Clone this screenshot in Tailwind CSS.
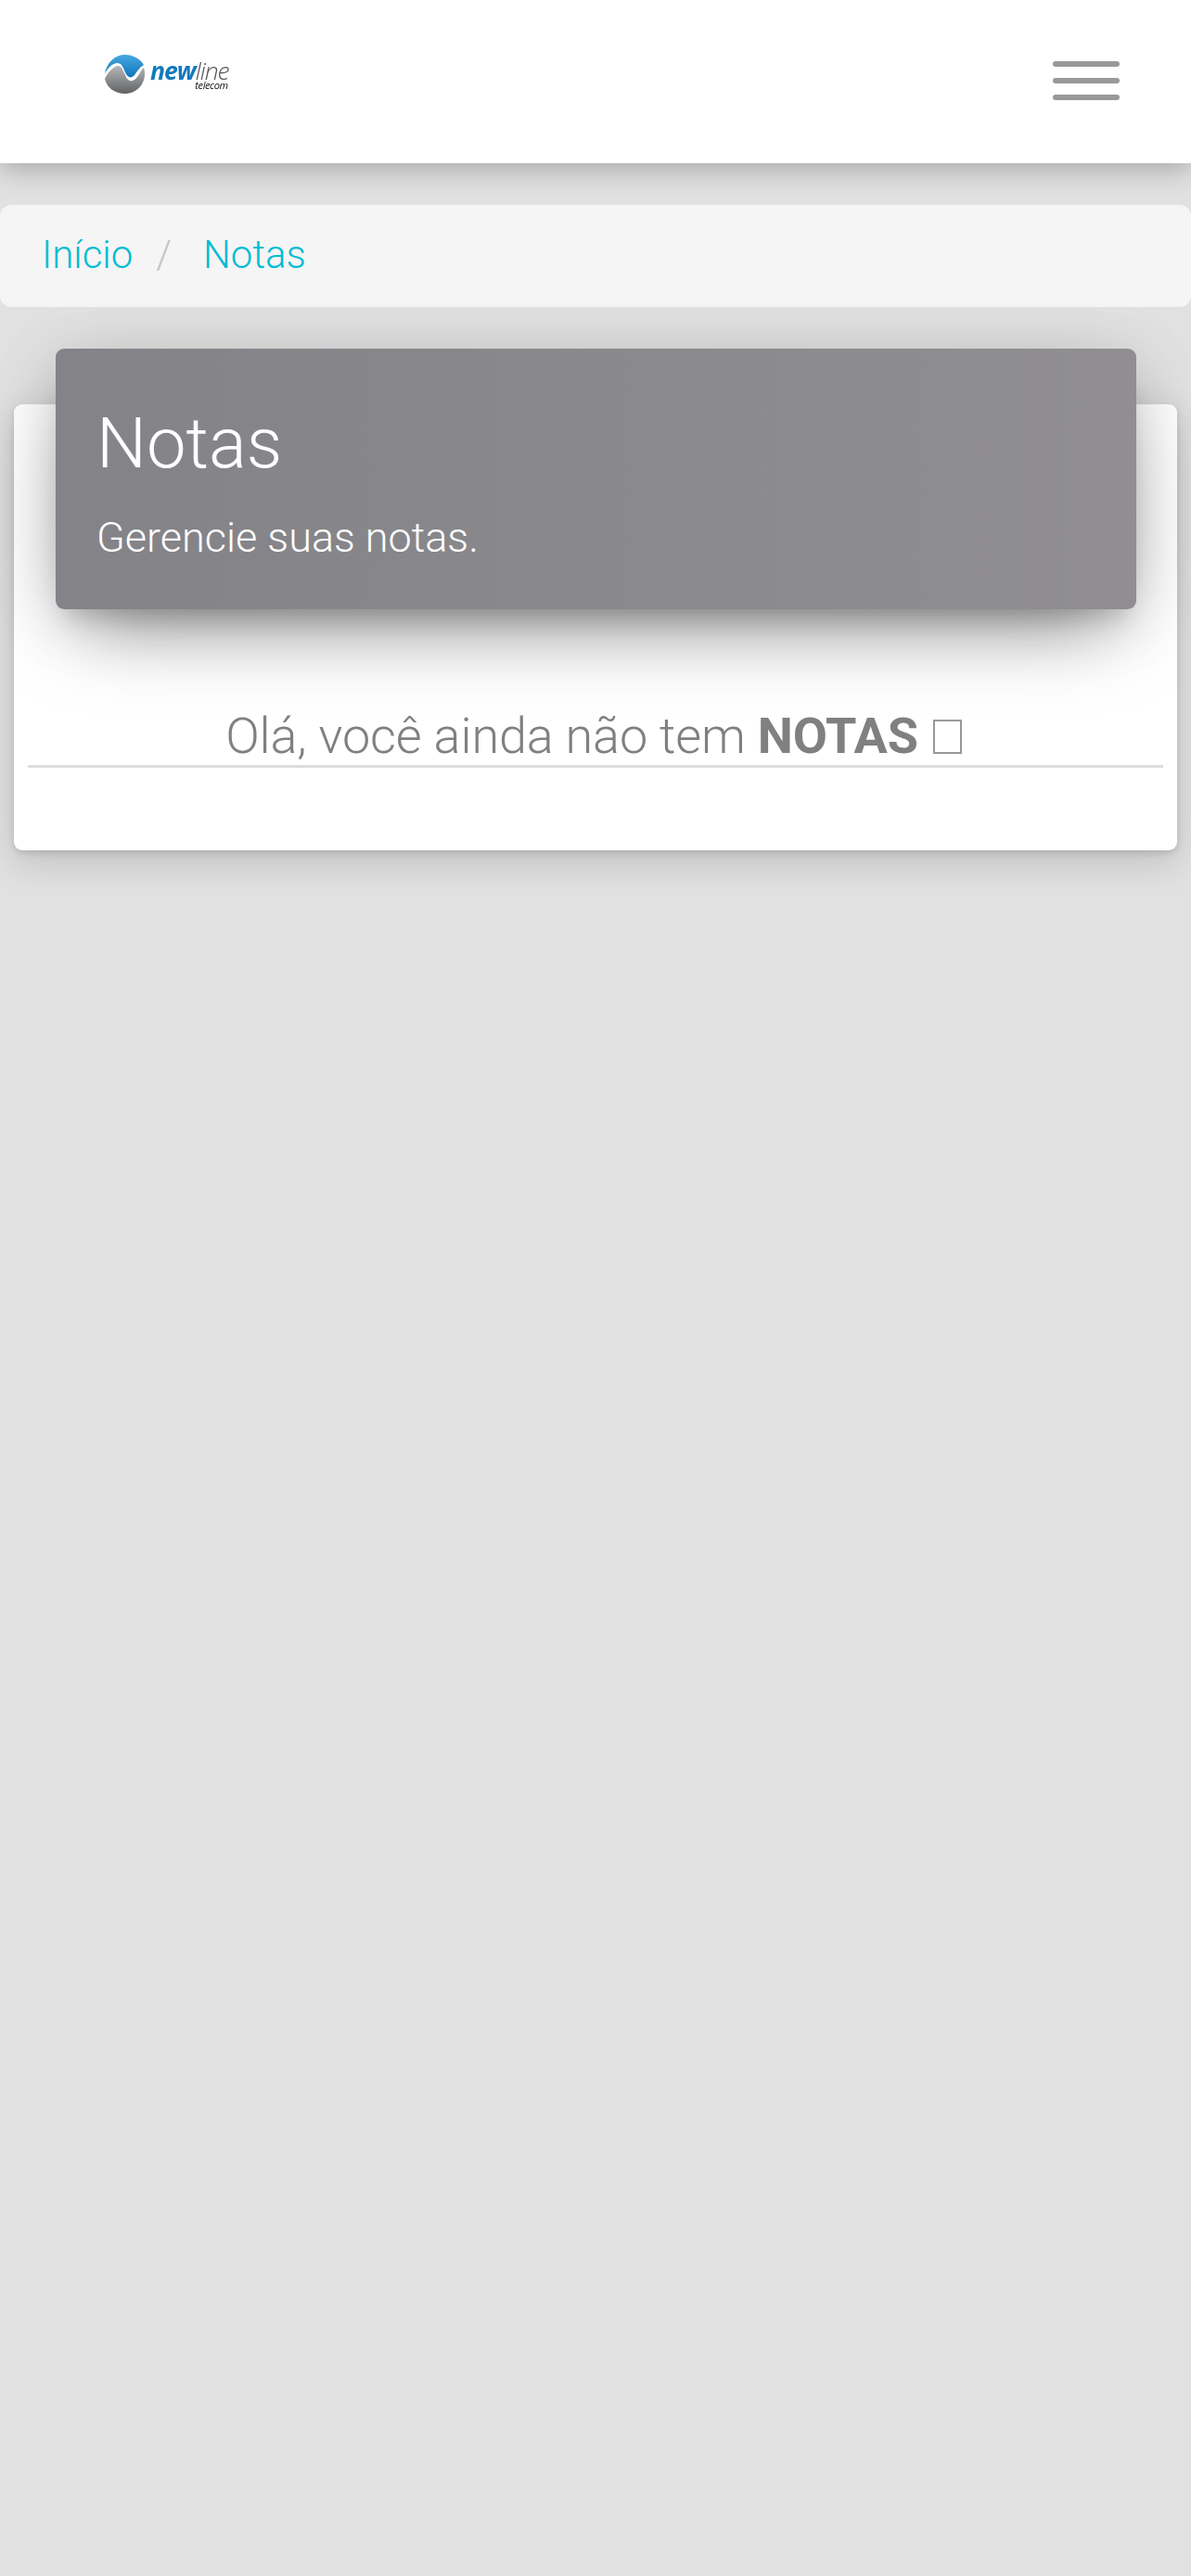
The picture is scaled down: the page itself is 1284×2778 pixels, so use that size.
<!DOCTYPE html>
<html lang="pt">
<head>
<meta charset="utf-8">
<script src="https://cdn.jsdelivr.net/npm/@tailwindcss/browser@4"></script>
</head>
<body class="m-0 h-[2778px] overflow-hidden bg-[#e1e1e1] font-['Roboto',sans-serif] font-light">
<header class="flex h-[176px] items-center justify-between bg-white pl-[112px] pr-[77px] shadow-[0_6px_28px_rgba(0,0,0,0.27)]">
  <div class="mt-[-17px] flex items-center gap-[6px] blur-[0.4px]">
    <svg width="44" height="44" viewBox="0 0 44 44">
      <defs>
        <linearGradient id="g1" x1="0" y1="0" x2="0" y2="1"><stop offset="0" stop-color="#45a8e0"/><stop offset="1" stop-color="#0f76b8"/></linearGradient>
        <linearGradient id="g2" x1="0" y1="0" x2="0" y2="1"><stop offset="0" stop-color="#b4b6b8"/><stop offset="1" stop-color="#606264"/></linearGradient>
      </defs>
      <path d="M1 22C3 9 12 1 23 1c8 0 16 4 20 11-5 3-8 8-10 11-2 2-4 3-6 2-4-2-5-9-8-13-1-1-3-2-4-2C9 10 4 15 1 22z" fill="url(#g1)"/>
      <path d="M1 27c3-7 9-13 14-14 4 0 5 4 7 8 2 4 3 7 6 8 4 1 7-2 10-7 2-3 3-6 5-7 1 2 1 5 1 7 0 12-10 21-21 21C11 43 3 36 1 27z" fill="url(#g2)"/>
    </svg>
    <div class="mt-[3px] flex flex-col items-end font-['Open_Sans',sans-serif] italic">
      <div class="text-[26.5px] leading-[22px] tracking-[-1px]"><span class="font-bold text-[#1279bd]">new</span><span class="font-light text-[#55575a]">line</span></div>
      <div class="mr-[1px] text-[11px] font-normal leading-[10px] tracking-[-0.4px] text-[#111111]">telecom</div>
    </div>
  </div>
  <button class="mt-[-3px] flex w-[72px] flex-col gap-[12px] bg-transparent p-0" aria-label="Menu">
    <span class="block h-[6px] rounded-[3px] bg-[#999999]"></span>
    <span class="block h-[6px] rounded-[3px] bg-[#999999]"></span>
    <span class="block h-[6px] rounded-[3px] bg-[#999999]"></span>
  </button>
</header>

<nav class="mt-[45px] flex h-[110px] items-center rounded-[12px] bg-[#f5f5f5] px-[45px] pb-[4px] text-[42px]">
  <a class="text-[#00bcd4]">Início</a>
  <span class="pl-[25px] pr-[34px] text-[#c4c4c4]">/</span>
  <a class="text-[#00bcd4]">Notas</a>
</nav>

<main class="mx-[15px] mt-[105px] h-[481px] rounded-[9px] bg-white px-[15px] shadow-[0_3px_6px_rgba(0,0,0,0.12),0_12px_40px_rgba(0,0,0,0.16)]">
  <section class="mx-[30px] mt-[-60px] inline-block h-[281px] w-[1165px] rounded-[9px] bg-gradient-to-r from-[#838388] to-[#908e90] px-[44px] pt-[57px] align-top text-white shadow-[0_36px_90px_-28px_rgba(0,0,0,0.5),0_12px_75px_0_rgba(0,0,0,0.12),0_20px_24px_-12px_rgba(0,0,0,0.15)]">
    <h1 class="text-[76px] font-light leading-[90px]">Notas</h1>
    <p class="mt-[33px] text-[45px] font-light leading-[48px]">Gerencie suas notas.</p>
  </section>
  <h2 class="mt-[104px] pr-[4px] text-center text-[54px] font-light leading-[65px] tracking-[-0.15px] text-[#808080]">Olá, você ainda não tem <strong class="font-bold">NOTAS</strong> <span class="ml-[3px] inline-block h-[37px] w-[31px] border-2 border-[#999999] align-[-1px]"></span></h2>
  <hr class="mt-[-1px] border-0 border-t-[3px] border-[#dddddd]">
</main>
</body>
</html>
